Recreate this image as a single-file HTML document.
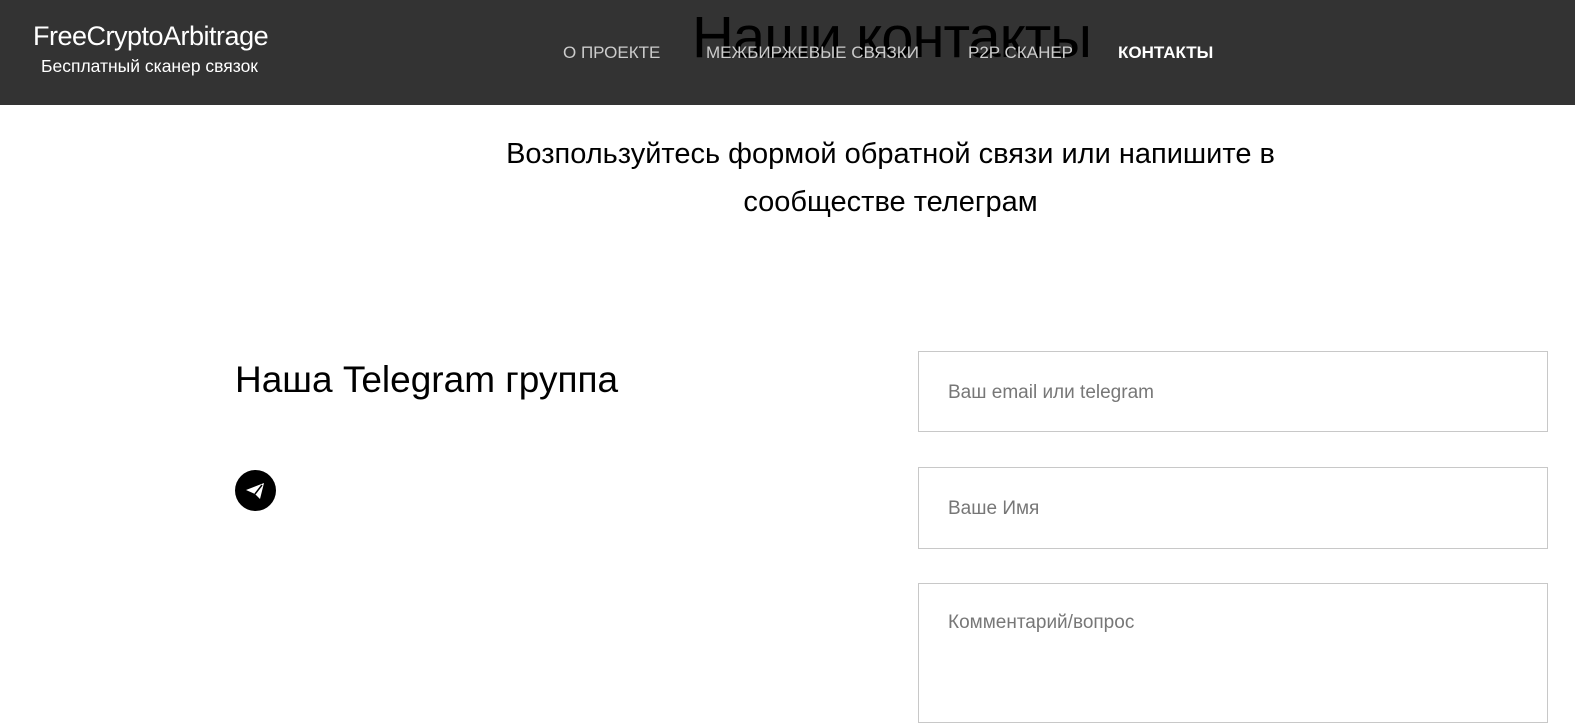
<!DOCTYPE html>
<html><head><meta charset="utf-8"><style>
*{margin:0;padding:0;box-sizing:border-box}
body{width:1575px;height:718px;overflow:hidden;background:#fff;font-family:"Liberation Sans",sans-serif;position:relative}
.hdr{position:absolute;left:0;top:0;width:1575px;height:105px;background:#333}
.logo1{position:absolute;left:33px;top:21px;color:#fff;font-size:27px;letter-spacing:-0.5px}
.logo2{position:absolute;left:41px;top:56px;color:#fff;font-size:17.5px}
.title{position:absolute;left:692px;top:4px;font-size:58px;color:#000;letter-spacing:-1px;white-space:nowrap}
.nav{position:absolute;top:43px;font-size:17px;color:#ccc;white-space:nowrap}
.sub{position:absolute;left:0;width:1575px;text-align:center;font-size:29px;color:#000;line-height:48px;top:130px;padding-left:206px}
.h2{position:absolute;left:235px;top:359px;font-size:37px;color:#000}
.tg{position:absolute;left:235px;top:470px;width:41px;height:41px;border-radius:50%;background:#000}
.in{position:absolute;left:918px;width:630px;border:1px solid #c8c8c8;font-size:19px;color:#777;padding-left:29px}
</style></head><body>
<div class="hdr"></div>
<div class="logo1">FreeCryptoArbitrage</div>
<div class="logo2">Бесплатный сканер связок</div>
<div class="title">Наши контакты</div>
<div class="nav" style="left:563px">О ПРОЕКТЕ</div>
<div class="nav" style="left:706px">МЕЖБИРЖЕВЫЕ СВЯЗКИ</div>
<div class="nav" style="left:968px">P2P СКАНЕР</div>
<div class="nav" style="left:1118px;color:#fff;font-weight:bold">КОНТАКТЫ</div>
<div class="sub">Возпользуйтесь формой обратной связи или напишите в<br>сообществе телеграм</div>
<div class="h2">Наша Telegram группа</div>
<div class="tg"><svg width="41" height="41" viewBox="0 0 41 41"><path d="M11 20 L29 13 L25 29 L20 24 Z" fill="#fff"/><path d="M20 24 L27 15" stroke="#000" stroke-width="1.5"/></svg></div>
<div class="in" style="top:351px;height:81px;padding-top:30px">Ваш email или telegram</div>
<div class="in" style="top:467px;height:82px;padding-top:30px">Ваше Имя</div>
<div class="in" style="top:583px;height:140px;padding-top:28px">Комментарий/вопрос</div>
</body></html>
